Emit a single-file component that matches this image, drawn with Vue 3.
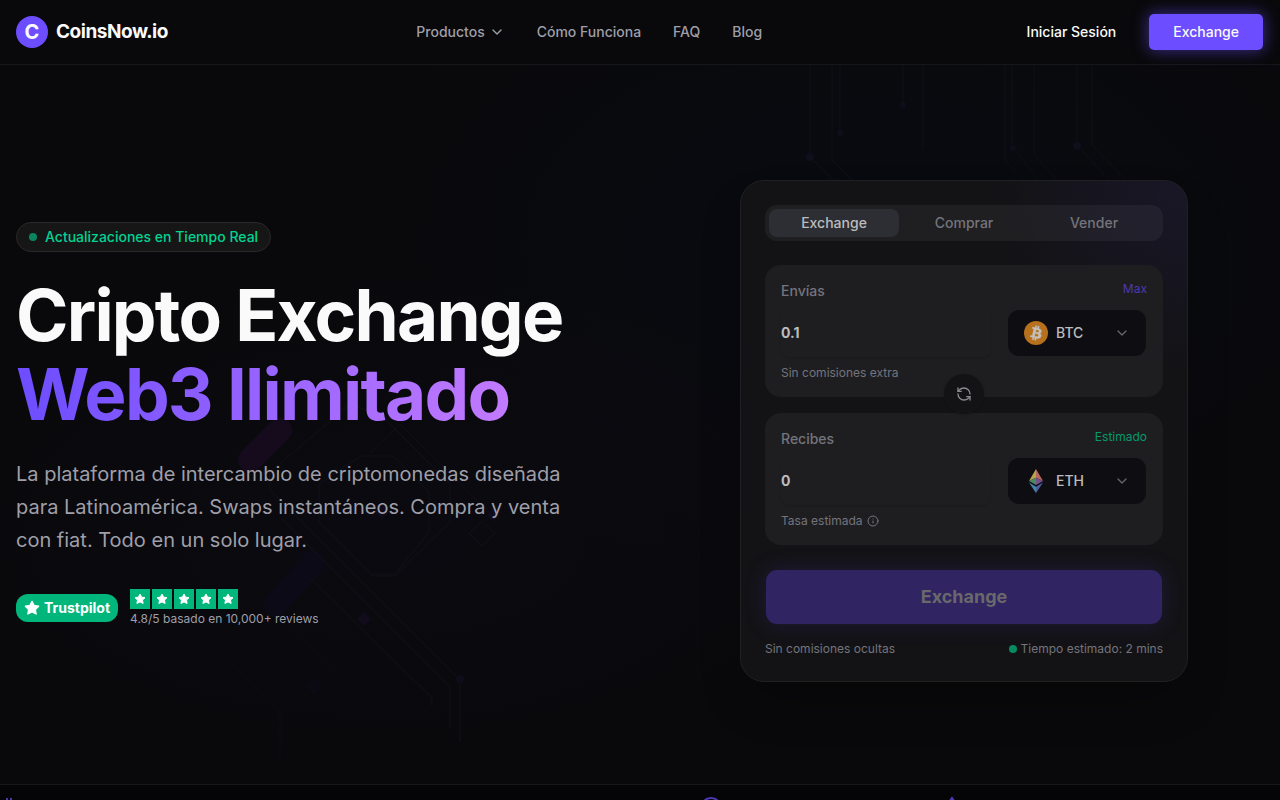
<template>
  <div class="page">
    <header class="header">
      <a href="#" class="brand">
        <span class="brand-mark">C</span>
        <span class="brand-name">CoinsNow.io</span>
      </a>

      <nav class="nav">
        <button type="button" class="nav-item">
          Productos
          <svg class="chevron" viewBox="0 0 24 24"><path d="m6 9 6 6 6-6" /></svg>
        </button>
        <a v-for="link in links" :key="link" href="#" class="nav-item">{{ link }}</a>
      </nav>

      <div class="actions">
        <a href="#" class="login">Iniciar Sesión</a>
        <button type="button" class="header-cta">Exchange</button>
      </div>
    </header>

    <main class="hero">
      <svg
        class="circuit"
        viewBox="0 65 1280 719"
        preserveAspectRatio="xMidYMid slice"
        aria-hidden="true"
      >
        <!-- soft capsules -->
        <g fill="none" stroke-linecap="round" stroke-width="24">
          <path d="M250 460 280 430" stroke="#150b1d" />
          <path d="M275 605 313 563" stroke="#0c0a17" />
        </g>
        <!-- traces, left side -->
        <g fill="none" stroke="#111119">
          <path d="M349 405 270 472v18l190 190v62" />
          <path d="m349 405 30 8 71 71v38l-55 54h-22l-54-54v-38l42-28h32l36 36v40l-34 42h-23" />
          <path d="m400 424 95 94M370 453l30-29M282 519l168 168v40M310 578l122 120v8" />
          <path d="m482 521 13 12-13 13-13-13z" />
          <path d="M230 661l50 50v50M260 601l105 95" stroke="#0c0c12" />
        </g>
        <g fill="#100c1c">
          <path d="m382 504 8 7-8 8-8-8zM493 509l6 6-6 6-6-6zM364 612l7 7-7 7-7-7z" />
          <path d="m314 677 10 9-10 9-10-9z" fill="#0b0a13" />
          <circle cx="460" cy="679" r="4" />
        </g>
        <!-- traces, right side -->
        <g fill="none" stroke="#0e101a">
          <path d="M810 65v92l30 30M832 65v95l22 22M840 65v68M903 65v40M923 65v85" />
          <path d="M1005 65v95l24 26M1012 65v80l30 40M1034 65v90l28 30M1077 65v80l36 40M1092 65v80l38 40" />
        </g>
        <g fill="#0e0f1b">
          <circle cx="810" cy="157" r="4" />
          <circle cx="840" cy="133" r="3" />
          <circle cx="903" cy="105" r="3" />
          <circle cx="1013" cy="148" r="3" />
          <circle cx="1077" cy="146" r="4" />
        </g>
      </svg>

      <section class="intro">
        <p class="badge"><span class="badge-dot"></span>Actualizaciones en Tiempo Real</p>
        <h1 class="title">
          Cripto Exchange<br />
          <span class="title-accent">Web3 Ilimitado</span>
        </h1>
        <p class="lead">
          La plataforma de intercambio de criptomonedas diseñada para Latinoamérica. Swaps
          instantáneos. Compra y venta con fiat. Todo en un solo lugar.
        </p>
        <div class="trust">
          <span class="trust-badge">
            <svg viewBox="0 0 24 24" class="trust-star"><path :d="star" /></svg>
            Trustpilot
          </span>
          <div>
            <div class="stars">
              <span v-for="n in 5" :key="n" class="star-box">
                <svg viewBox="0 0 24 24"><path :d="star" /></svg>
              </span>
            </div>
            <p class="reviews">4.8/5 basado en 10,000+ reviews</p>
          </div>
        </div>
      </section>

      <section class="exchange">
        <form class="card" @submit.prevent>
          <div class="tabs">
            <button
              v-for="tab in tabs"
              :key="tab"
              type="button"
              class="tab"
              :class="{ active: tab === activeTab }"
              @click="activeTab = tab"
            >
              {{ tab }}
            </button>
          </div>

          <div class="field">
            <div class="field-head">
              <label for="send">Envías</label>
              <button type="button" class="max">Max</button>
            </div>
            <div class="field-row">
              <input id="send" v-model="sendAmount" class="amount" type="text" inputmode="decimal" />
              <div class="coin">
                <svg class="coin-icon" viewBox="0 0 32 32">
                  <circle cx="16" cy="16" r="16" fill="#b7701c" />
                  <path
                    fill="#c4c1bc"
                    stroke="#c4c1bc"
                    stroke-width="0.5"
                    d="M23.2 14c.3-2.1-1.3-3.2-3.5-4l.7-2.8-1.7-.4-.7 2.7-1.4-.3.7-2.7-1.7-.5-.7 2.9-1.1-.3-2.4-.6-.4 1.9 1.2.3c.7.1.8.6.8 1l-1.9 7.7c-.1.2-.3.5-.8.4l-1.2-.3-.9 1.9 3.5.9-.7 2.8 1.7.5.7-2.9 1.4.4-.7 2.8 1.7.4.7-2.8c2.9.6 5.2.3 6.1-2.3.8-2.1 0-3.4-1.5-4.2 1.1-.2 1.9-1 2.1-2.5zm-3.9 5.5c-.5 2.1-4.1 1-5.3.7l1-3.8c1.1.3 4.8.9 4.3 3.1zm.5-5.5c-.4 2-3.4 1-4.4.7l.9-3.4c1 .2 4.1.7 3.5 2.7z"
                  />
                </svg>
                <select v-model="sendCoin" class="coin-select" aria-label="Envías">
                  <option v-for="coin in coins" :key="coin">{{ coin }}</option>
                </select>
                <svg class="chevron coin-chevron" viewBox="0 0 24 24"><path d="m6 9 6 6 6-6" /></svg>
              </div>
            </div>
            <p class="hint">Sin comisiones extra</p>
            <button type="button" class="swap" aria-label="Exchange">
              <svg viewBox="0 0 24 24">
                <path d="M21 12a9 9 0 0 0-9-9 9.75 9.75 0 0 0-6.74 2.74L3 8" />
                <path d="M3 3v5h5" />
                <path d="M3 12a9 9 0 0 0 9 9 9.75 9.75 0 0 0 6.74-2.74L21 16" />
                <path d="M16 16h5v5" />
              </svg>
            </button>
          </div>

          <div class="field">
            <div class="field-head">
              <label for="receive">Recibes</label>
              <span class="estimate">Estimado</span>
            </div>
            <div class="field-row">
              <input id="receive" v-model="receiveAmount" class="amount" type="text" readonly />
              <div class="coin">
                <svg class="coin-icon" viewBox="0 0 24 24">
                  <path d="M12 0 5 12l7-3.200z" fill="#b9a34f" />
                  <path d="m12 0 7 12-7-3.200z" fill="#b5685c" />
                  <path d="m5 12 7-3.200V16z" fill="#4b8960" />
                  <path d="m19 12-7-3.200V16z" fill="#75528c" />
                  <path d="m5 13.500 7 4.200V24z" fill="#4188a8" />
                  <path d="m19 13.500-7 4.200V24z" fill="#4d609e" />
                </svg>
                <select v-model="receiveCoin" class="coin-select" aria-label="Recibes">
                  <option v-for="coin in coins" :key="coin">{{ coin }}</option>
                </select>
                <svg class="chevron coin-chevron" viewBox="0 0 24 24"><path d="m6 9 6 6 6-6" /></svg>
              </div>
            </div>
            <p class="hint">
              Tasa estimada
              <svg class="info" viewBox="0 0 24 24">
                <circle cx="12" cy="12" r="10" />
                <path d="M12 16v-4M12 8h.01" />
              </svg>
            </p>
          </div>

          <button type="submit" class="submit" disabled>Exchange</button>

          <div class="card-foot">
            <span>Sin comisiones ocultas</span>
            <span class="eta"><i class="eta-dot"></i>Tiempo estimado: 2 mins</span>
          </div>
        </form>
      </section>
    </main>

    <div class="ticker" aria-hidden="true">
      <svg viewBox="0 0 24 24"><path d="M7 2v3M11 2v3M4 5h8a3.500 3.500 0 0 1 0 7H6V5M6 12h7a3.500 3.500 0 0 1 0 7H4M7 19v3M11 19v3" /></svg>
      <svg viewBox="0 0 24 24"><circle cx="10" cy="12" r="10" /></svg>
      <svg viewBox="0 0 24 24"><path d="m11 2 7 10-7 10-7-10z" /></svg>
    </div>
  </div>
</template>

<script setup>
import { ref } from "vue";

const links = ["Cómo Funciona", "FAQ", "Blog"];
const tabs = ["Exchange", "Comprar", "Vender"];
const coins = ["BTC", "ETH"];

const activeTab = ref("Exchange");
const sendAmount = ref("0.1");
const receiveAmount = ref("0");
const sendCoin = ref("BTC");
const receiveCoin = ref("ETH");

const star = "m12 2 3.100 6.300 6.900 1-5 4.900 1.200 6.800-6.200-3.200L5.800 21 7 14.200 2 9.300l6.900-1z";
</script>

<style>
body {
  margin: 0;
  background: #09090b;
}
</style>

<style scoped>
* {
  box-sizing: border-box;
}

.page {
  height: 100vh;
  min-height: 800px;
  display: flex;
  flex-direction: column;
  overflow: hidden;
  background: #09090b;
  color: #fafafa;
  font-family: Inter, "Liberation Sans", sans-serif;
  font-size: 14px;
  line-height: 20px;
}

p,
h1 {
  margin: 0;
}

a {
  color: inherit;
  text-decoration: none;
}

button,
input,
select {
  font: inherit;
  margin: 0;
}

button {
  cursor: pointer;
}

.header {
  display: flex;
  align-items: center;
  justify-content: space-between;
  height: 65px;
  flex-shrink: 0;
  padding: 0 16px;
  border-bottom: 1px solid #17171a;
}

.brand {
  display: flex;
  align-items: center;
  gap: 8px;
  font-size: 20px;
  font-weight: 700;
}

.brand-mark {
  width: 32px;
  height: 32px;
  border-radius: 50%;
  background: #6c4dff;
  display: flex;
  align-items: center;
  justify-content: center;
}

.brand-name {
  font-size: 19px;
  letter-spacing: -0.025em;
}

.nav {
  display: flex;
  align-items: center;
  gap: 32px;
}

.nav-item {
  display: flex;
  align-items: center;
  gap: 4px;
  padding: 0;
  border: none;
  background: transparent;
  color: #9f9fa9;
  font-weight: 500;
}

.chevron {
  width: 16px;
  height: 16px;
  fill: none;
  stroke: currentColor;
  stroke-width: 2;
  stroke-linecap: round;
  stroke-linejoin: round;
}

.actions {
  display: flex;
  align-items: center;
  gap: 16px;
}

.login {
  padding: 8px 16px;
  font-weight: 500;
}

.header-cta {
  height: 38px;
  padding: 0 24px;
  border: 1px solid transparent;
  border-radius: 6px;
  background: #6c4dff;
  background-clip: padding-box;
  box-shadow: 0 0 15px rgba(108, 77, 255, 0.5);
  color: #fafafa;
  font-weight: 500;
}

.hero {
  position: relative;
  display: grid;
  grid-template-columns: 1fr 1fr;
  gap: 48px;
  align-items: center;
  min-height: 719px;
  padding: 0 16px;
  background:
    radial-gradient(ellipse at 30% 65%, rgba(30, 20, 70, 0.09), transparent 40%),
    radial-gradient(ellipse at 68% 25%, rgba(10, 16, 45, 0.2), transparent 45%);
}

.circuit {
  position: absolute;
  inset: 0;
  width: 100%;
  height: 100%;
}

.intro,
.exchange {
  position: relative;
}

.badge {
  display: inline-flex;
  align-items: center;
  gap: 8px;
  height: 30px;
  padding: 0 12px;
  border: 1px solid #29292b;
  border-radius: 15px;
  background: #161617;
  color: #00d492;
  font-weight: 500;
}

.badge-dot {
  width: 8px;
  height: 8px;
  border-radius: 50%;
  background: #0b8460;
}

.title {
  margin-top: 24px;
  font-size: 71px;
  line-height: 79px;
  font-weight: 700;
  letter-spacing: -0.025em;
  white-space: nowrap;
}

.title-accent {
  display: inline-block;
  background: linear-gradient(90deg, #6c4dff, #c27aff);
  background-clip: text;
  -webkit-background-clip: text;
  color: transparent;
}

.lead {
  max-width: 576px;
  margin-top: 24px;
  color: #9f9fa9;
  font-size: 20px;
  line-height: 33px;
}

.trust {
  display: flex;
  align-items: center;
  gap: 12px;
  margin-top: 32px;
}

.trust-badge {
  display: flex;
  align-items: center;
  gap: 4px;
  height: 28px;
  padding: 0 8px;
  border-radius: 12px;
  background: #00b67a;
  color: #ffffff;
  font-weight: 700;
}

.trust-star,
.star-box svg {
  fill: #ffffff;
  stroke: #ffffff;
  stroke-width: 2;
  stroke-linejoin: round;
}

.trust-star {
  width: 16px;
  height: 16px;
}

.stars {
  display: flex;
  gap: 2px;
}

.star-box {
  display: flex;
  align-items: center;
  justify-content: center;
  width: 20px;
  height: 20px;
  background: #00b67a;
}

.star-box svg {
  width: 12px;
  height: 12px;
}

.reviews {
  margin-top: 2px;
  color: #9f9fa9;
  font-size: 12px;
  line-height: 16px;
}

.exchange {
  display: flex;
  justify-content: center;
  padding-top: 12px;
}

.card {
  width: 100%;
  max-width: 448px;
  padding: 24px;
  border: 1px solid #202023;
  border-radius: 24px;
  background:
    radial-gradient(circle at 100% 0, rgba(60, 40, 130, 0.16), transparent 190px),
    #131316;
  box-shadow: 0 25px 50px -12px rgba(0, 0, 0, 0.3);
}

.tabs {
  display: grid;
  grid-template-columns: repeat(3, 1fr);
  height: 36px;
  margin-bottom: 24px;
  padding: 4px;
  border-radius: 12px;
  background: rgba(255, 255, 255, 0.05);
}

.tab {
  padding: 0;
  border: none;
  border-radius: 8px;
  background: transparent;
  color: #74747c;
  font-weight: 500;
}

.tab.active {
  background: #2d2e33;
  color: #bcbcbd;
}

.field {
  position: relative;
  height: 132px;
  padding: 16px;
  border-radius: 16px;
  background: #1e1e21;
}

.field + .field {
  margin-top: 16px;
}

.field-head {
  display: flex;
  align-items: flex-start;
  justify-content: space-between;
  height: 20px;
  color: #74747c;
  font-weight: 500;
}

.max,
.estimate {
  padding: 0;
  border: none;
  background: transparent;
  font-size: 12px;
  font-weight: 400;
  line-height: 16px;
}

.max {
  color: #4d38b2;
}

.estimate {
  color: #049a6b;
}

.field-row {
  display: flex;
  gap: 16px;
  margin: 8px 0;
}

.amount {
  flex: 1;
  min-width: 0;
  height: 48px;
  padding: 0;
  border: none;
  border-radius: 8px;
  outline: none;
  background: transparent;
  box-shadow: 0 1px 2px rgba(0, 0, 0, 0.15);
  color: #bcbcbd;
  font-weight: 700;
}

.coin {
  position: relative;
  width: 140px;
  height: 48px;
}

.coin-select {
  width: 100%;
  height: 100%;
  padding: 0 40px 0 48px;
  appearance: none;
  border: 1px solid transparent;
  border-radius: 12px;
  background: #0e0e12;
  background-clip: padding-box;
  color: #bcbcbd;
  font-weight: 500;
}

.coin-icon,
.coin-chevron {
  position: absolute;
  pointer-events: none;
}

.coin-icon {
  top: 12px;
  left: 17px;
  width: 24px;
  height: 24px;
}

.coin-chevron {
  top: 16px;
  right: 17px;
  color: #65656a;
}

.hint {
  display: flex;
  align-items: center;
  gap: 4px;
  color: #74747c;
  font-size: 12px;
  line-height: 16px;
}

.info {
  width: 12px;
  height: 12px;
  fill: none;
  stroke: currentColor;
  stroke-width: 2;
  stroke-linecap: round;
}

.swap {
  position: absolute;
  z-index: 1;
  bottom: -17px;
  left: calc(50% - 20px);
  display: flex;
  align-items: center;
  justify-content: center;
  width: 40px;
  height: 40px;
  padding: 0;
  border: none;
  border-radius: 50%;
  background: #131316;
  box-shadow: 0 1px 3px rgba(0, 0, 0, 0.15);
  color: #8a8a8f;
}

.swap svg {
  width: 16px;
  height: 16px;
  fill: none;
  stroke: currentColor;
  stroke-width: 2;
  stroke-linecap: round;
  stroke-linejoin: round;
}

.submit {
  display: block;
  width: 100%;
  height: 56px;
  margin: 24px 0 16px;
  border: 1px solid transparent;
  border-radius: 12px;
  background: #302463;
  background-clip: padding-box;
  box-shadow: 0 0 20px rgba(60, 40, 130, 0.3);
  color: #69686b;
  font-size: 18px;
  font-weight: 700;
}

.card-foot {
  display: flex;
  justify-content: space-between;
  color: #74747c;
  font-size: 12px;
  line-height: 16px;
}

.eta {
  display: flex;
  align-items: center;
  gap: 4px;
}

.eta-dot {
  width: 8px;
  height: 8px;
  border-radius: 50%;
  background: #068b61;
}

.ticker {
  display: grid;
  flex: 1;
  grid-template-columns: 703fr 241fr 340fr;
  padding-top: 11px;
  border-top: 1px solid #17171a;
  background: #050507;
  overflow: hidden;
}

.ticker svg {
  width: 24px;
  height: 24px;
  fill: none;
  stroke: #6c4dff;
  stroke-width: 2;
  opacity: 0.7;
}
</style>
